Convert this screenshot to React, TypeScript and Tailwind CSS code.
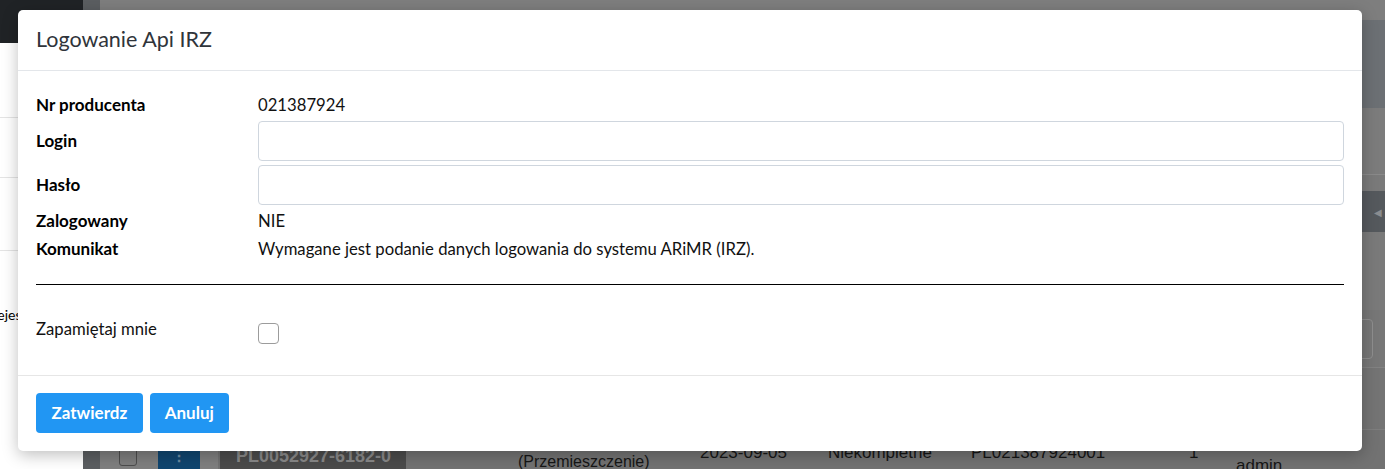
import React from 'react';

const lato = { fontFamily: 'Lato, "Noto Sans", sans-serif' };
const narrow = { fontFamily: '"Liberation Sans Narrow", "Liberation Sans", sans-serif' };

function Background() {
    return (
        <div className="absolute inset-0 flex overflow-hidden">
            {/* left sidebar, not dimmed */}
            <div className="w-[83px] shrink-0 bg-white flex flex-col">
                <div className="h-[43px] bg-[#202326]" />
                <div className="h-[75px] border-b border-[#e4e4e4]" />
                <div className="h-[60px] border-b border-[#e4e4e4]" />
                <div className="h-[73px] border-b border-[#e4e4e4]" />
                <div className="mt-[54px] w-[18px] overflow-hidden">
                    <div className="whitespace-nowrap text-[14px] leading-5 text-black -ml-[11px]" style={lato}>
                        Rejestracje
                    </div>
                </div>
            </div>

            {/* dimmed page */}
            <div className="flex-1 flex bg-[#7a7a7a]">
                <div className="w-[17px] shrink-0 bg-[#5b5e61]" />
                <div className="flex-1 flex flex-col overflow-hidden">
                    <div className="h-[20px] shrink-0 bg-[#7e7e7e]" />
                    <div className="h-[88px] shrink-0 bg-[#6c7074]" />
                    <div className="h-[67px] shrink-0 bg-[#7c7c7c] border-b border-[#8a8a8a]" />
                    <div className="h-[16px] shrink-0" />
                    <div className="h-[41px] shrink-0 bg-[#55595d] flex items-center justify-end pr-[3px]">
                        <span className="text-[10px] text-[#8a8d90] leading-none">◀</span>
                    </div>
                    <div className="h-[78px] shrink-0" />
                    <div className="h-[58px] shrink-0 flex items-center justify-end pr-[12px] border-b border-[#828282] bg-[#777]">
                        <div className="w-[60px] h-[40px] rounded-[4px] border border-[#8e8e8e]" />
                    </div>
                    <div className="h-[62px] shrink-0 bg-[#747474] border-b border-[#7e7e7e]" />

                    {/* table row peeking out below the dialog */}
                    <div className="flex-1 bg-[#727272] flex items-stretch whitespace-nowrap text-[#161616] text-[17px] leading-5" style={narrow}>
                        <div className="w-[118px] shrink-0 bg-[#7f7f7f] flex items-start pl-[19px] gap-[21px]">
                            <div className="w-[18px] h-[18px] mt-[18px] rounded-[3px] border border-[#4c4c4c] bg-[#7d7d7d]" />
                            <div className="w-[42px] self-stretch bg-[#10456f] flex justify-center pt-[17px]">
                                <span className="text-[#6c8aa2] font-bold text-[16px] leading-[18px]">⋮</span>
                            </div>
                        </div>
                        <div className="w-[2px] shrink-0" />
                        <div className="w-[186px] shrink-0 bg-[#4b4b4b] pl-[16px] pt-[16px] text-[#898989] font-bold text-[18px] leading-5">
                            PL0052927-6182-0
                        </div>
                        <div className="w-[112px] shrink-0" />
                        <div className="w-[182px] shrink-0 pt-[22px] text-[16px]">(Przemieszczenie)</div>
                        <div className="w-[128px] shrink-0 pt-[13px]">2023-09-05</div>
                        <div className="w-[143px] shrink-0 pt-[13px]">Niekompletne</div>
                        <div className="w-[218px] shrink-0 pt-[13px]">PL021387924001</div>
                        <div className="w-[47px] shrink-0 pt-[13px]">1</div>
                        <div className="w-[110px] shrink-0 pt-[26px]">admin</div>
                    </div>
                </div>
            </div>
        </div>
    );
}

function Row({ label, children }: { label: string; children: React.ReactNode }) {
    return (
        <div className="flex items-center">
            <div className="w-[222px] shrink-0 text-[17px] leading-6 font-bold text-black">{label}</div>
            <div className="flex-1 text-[16.7px] leading-6 text-[#111]">{children}</div>
        </div>
    );
}

export default function App() {
    return (
        <div className="relative w-[1385px] h-[469px] overflow-hidden" style={lato}>
            <Background />

            <div className="absolute left-[18px] top-[10px] w-[1344px] bg-white rounded-[5px] shadow-[0_4px_16px_rgba(0,0,0,0.25)] flex flex-col">
                <div className="h-[61px] border-b border-[#e3e6ea] flex items-center px-[18px]">
                    <h2 className="text-[21.5px] text-[#2f343a] leading-none">Logowanie Api IRZ</h2>
                </div>

                <div className="px-[18px] pt-[22px] pb-[31px] flex flex-col">
                    <div className="flex flex-col gap-[4px]">
                        <Row label="Nr producenta">021387924</Row>
                        <Row label="Login">
                            <input className="w-full h-[40px] rounded-[4px] border border-[#cfd6de] px-3 outline-none" />
                        </Row>
                        <Row label="Hasło">
                            <input type="password" className="w-full h-[40px] rounded-[4px] border border-[#cfd6de] px-3 outline-none" />
                        </Row>
                        <Row label="Zalogowany">NIE</Row>
                        <Row label="Komunikat">Wymagane jest podanie danych logowania do systemu ARiMR (IRZ).</Row>
                    </div>

                    <hr className="mt-[23px] border-0 border-t border-black" />

                    <div className="mt-[32px] flex items-start">
                        <div className="w-[222px] shrink-0 text-[16.7px] leading-6 text-[#111]">Zapamiętaj mnie</div>
                        <div className="w-[21px] h-[21px] mt-[6px] rounded-[4px] border border-[#9c9c9c] bg-white" />
                    </div>
                </div>

                <div className="border-t border-[#e6e6e6] px-[18px] pt-[17px] pb-[18px] flex gap-[7px]">
                    <button className="h-[40px] px-[15.5px] rounded-[4px] bg-[#2196f3] text-white font-bold text-[17px]">Zatwierdz</button>
                    <button className="h-[40px] px-[15px] rounded-[4px] bg-[#2196f3] text-white font-bold text-[17px]">Anuluj</button>
                </div>
            </div>
        </div>
    );
}
